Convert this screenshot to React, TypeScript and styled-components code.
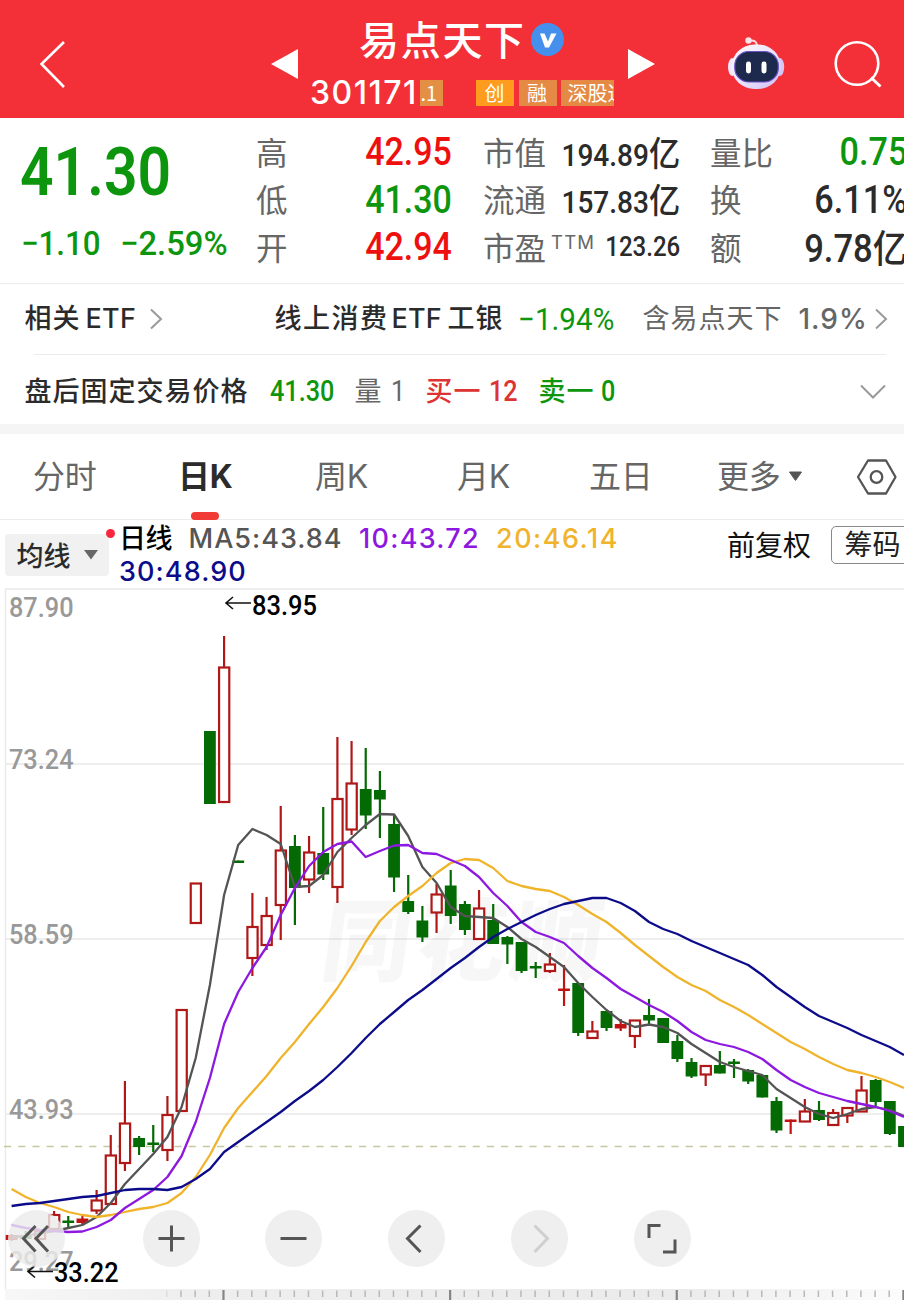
import React from "react";
import styled, { createGlobalStyle } from "styled-components";

const GREEN = "#0d960d";
const RED = "#ee0f0f";
const INK = "#2b2b2b";
const GREY = "#666666";

const CJK = `"Noto Sans CJK SC", sans-serif`;
const DIGITS = `Roboto, "Noto Sans CJK SC", sans-serif`;
const LATIN = `Inter, "Noto Sans CJK SC", sans-serif`;

const GlobalStyle = createGlobalStyle`
  * { box-sizing: border-box; }
  body { margin: 0; background: #fff; }
`;

const Page = styled.main`
  width: 904px;
  height: 1300px;
  display: flex;
  flex-direction: column;
  overflow: hidden;
  background: #fff;
  font-family: ${CJK};
  color: ${INK};
`;

/* ---------- header ---------- */

const Header = styled.header`
  height: 117.5px;
  flex: none;
  display: flex;
  background: #f33038;
  color: #fff;
`;

const HeaderSide = styled.div<{ $w: number }>`
  width: ${(p) => p.$w}px;
  flex: none;
  svg { display: block; }
`;

const Identity = styled.div`
  width: 330px;
  flex: none;
  padding: 14px 0 0 12px;
`;

const TitleLine = styled.div`
  display: flex;
  align-items: center;
  height: 50px;
  padding-left: 49px;
`;

const StockName = styled.h1`
  margin: 0;
  width: 172px;
  font-size: 40px;
  line-height: 48px;
  height: 50px;
  font-weight: 500;
  letter-spacing: 1.7px;
  white-space: nowrap;
`;

const CodeLine = styled.div`
  display: flex;
  height: 27px;
  margin-top: 15.5px;
  width: 304px;
  overflow: hidden;
`;

const Code = styled.span`
  width: 110px;
  flex: none;
  font: 500 32px/26px ${LATIN};
  letter-spacing: 1.5px;
  white-space: nowrap;
`;

const Tag = styled.span<{ $bg: string; $w: number; $gap?: number; $pad?: number }>`
  flex: none;
  width: ${(p) => p.$w}px;
  height: 26px;
  margin-left: ${(p) => p.$gap ?? 0}px;
  padding-left: ${(p) => p.$pad ?? 0}px;
  background: ${(p) => p.$bg};
  font: 400 20px/25px ${CJK};
  white-space: nowrap;
`;

/* ---------- quote ---------- */

const Quote = styled.section`
  height: 166px;
  flex: none;
  display: flex;
  border-bottom: 1.5px solid #ececec;
`;

const Figure = styled.span<{
  $size: number;
  $color?: string;
  $sx?: number;
  $right?: boolean;
  $weight?: number;
}>`
  display: inline-block;
  flex: none;
  font-family: ${DIGITS};
  font-size: ${(p) => p.$size}px;
  line-height: 1;
  font-weight: ${(p) => p.$weight ?? 500};
  color: ${(p) => p.$color ?? INK};
  white-space: nowrap;
  transform: scaleX(${(p) => p.$sx ?? 0.92});
  transform-origin: ${(p) => (p.$right ? "right" : "left")} center;
`;

const Unit = styled.span<{ $size: number }>`
  font-family: ${CJK};
  font-size: ${(p) => p.$size}px;
  line-height: 1;
`;

const PriceBlock = styled.div`
  width: 256px;
  flex: none;
  padding: 20px 0 0 20px;
`;

const PriceLine = styled.div`
  display: flex;
  align-items: center;
  height: 70px;
`;

const ChangeLine = styled.div`
  display: grid;
  grid-template-columns: 99px 120px;
  align-items: center;
  height: 40px;
  margin-top: 15.5px;
  padding-left: 1px;
`;

const StatColumn = styled.div<{ $w: number; $gap: number }>`
  width: ${(p) => p.$w}px;
  flex: none;
  margin-right: ${(p) => p.$gap}px;
  padding-top: 11px;
`;

const Stat = styled.div`
  display: flex;
  height: 47.6px;
  align-items: center;
  justify-content: space-between;
  white-space: nowrap;
`;

const StatLabel = styled.span`
  display: flex;
  flex: none;
  height: 47px;
  font-size: 31.5px;
  line-height: 45px;
  color: ${GREY};
`;

const Ttm = styled.sup`
  margin-left: 5px;
  font: 400 18.5px/37px ${LATIN};
  letter-spacing: 1.2px;
`;

/* ---------- info rows ---------- */

const InfoRow = styled.section<{ $h: number; $drop: number }>`
  display: flex;
  flex: none;
  align-items: center;
  height: ${(p) => p.$h}px;
  padding: ${(p) => p.$drop}px 0 0 24.5px;
`;

const Divider = styled.hr`
  flex: none;
  height: 1.5px;
  margin: 0 18px 0 34px;
  border: 0;
  background: #ebebeb;
`;

const Band = styled.div`
  flex: none;
  height: 10px;
  background: #f5f5f5;
`;

const Phrase = styled.span<{ $w: number; $color?: string; $weight?: number; $ls?: number; $size?: number }>`
  width: ${(p) => p.$w}px;
  flex: none;
  font: ${(p) => p.$weight ?? 500} ${(p) => p.$size ?? 27}px/40px ${LATIN};
  letter-spacing: ${(p) => p.$ls ?? 1}px;
  color: ${(p) => p.$color ?? INK};
  white-space: nowrap;
`;

const Cell = styled.span<{ $w: number }>`
  display: flex;
  flex: none;
  width: ${(p) => p.$w}px;
`;

/* ---------- tabs ---------- */

const Tabs = styled.nav`
  display: flex;
  flex: none;
  height: 86px;
  padding-left: 33px;
  border-bottom: 1.5px solid #ececec;
`;

const Tab = styled.div<{ $w: number; $active?: boolean }>`
  position: relative;
  width: ${(p) => p.$w}px;
  flex: none;
  display: flex;
  align-items: center;
  font: ${(p) => (p.$active ? 700 : 400)} 32px/86px ${LATIN};
  letter-spacing: -0.3px;
  color: ${(p) => (p.$active ? INK : GREY)};
  ${(p) =>
    p.$active &&
    `&::after {
      content: "";
      position: absolute;
      left: 13px;
      bottom: -0.5px;
      width: 28px;
      height: 7.5px;
      border-radius: 4px;
      background: #f03b37;
    }`}
`;

/* ---------- indicator row ---------- */

const Indicators = styled.section`
  display: flex;
  flex: none;
  height: 68px;
  padding-left: 5px;
`;

const AverageButton = styled.div`
  position: relative;
  flex: none;
  display: flex;
  align-items: center;
  gap: 13px;
  width: 104px;
  height: 42px;
  margin-top: 13.5px;
  padding-left: 11.5px;
  border-radius: 4px;
  background: #f1f1f1;
  font: 500 27px/42px ${CJK};
`;

const Dot = styled.i`
  position: absolute;
  top: -5px;
  right: -6px;
  width: 9px;
  height: 9px;
  border-radius: 50%;
  background: #f8273c;
`;

const Legend = styled.div`
  width: 618px;
  flex: none;
  padding: 2px 0 0 10px;
`;

const LegendLine = styled.div`
  display: flex;
  height: 33px;
  align-items: center;
`;

const Adjust = styled.span`
  width: 103.5px;
  flex: none;
  font: 400 28px/49px ${CJK};
  color: #111;
`;

const ChipButton = styled.div`
  flex: none;
  width: 90px;
  height: 37.5px;
  margin-top: 6px;
  padding-left: 13px;
  border: 1.5px solid #888;
  border-radius: 5px;
  font: 400 28px/33px ${CJK};
  color: #222;
  white-space: nowrap;
`;

/* ---------- chart ---------- */

const ChartArea = styled.section`
  position: relative;
  flex: none;
  height: 712px;
  svg { display: block; }
`;

const ZoomBar = styled.div`
  position: absolute;
  left: 8px;
  top: 621.5px;
  display: flex;
`;

const RoundButton = styled.div<{ $gap: number }>`
  width: 57px;
  height: 57px;
  margin-right: ${(p) => p.$gap}px;
  border-radius: 50%;
  background: rgba(235, 235, 235, 0.82);
`;

type Candle = [kind: "r" | "g" | "f", high: number, top: number, bottom: number, low: number];

const candles: Candle[] = [
  ["f", 1234, 1235, 1240, 1241], ["g", 1231, 1236, 1239, 1243], ["r", 1229, 1231, 1239, 1239],
  ["r", 1211, 1215, 1229, 1229], ["g", 1216, 1220.5, 1223, 1227], ["f", 1214, 1218.5, 1223, 1225],
  ["r", 1190, 1200.5, 1210.5, 1214], ["r", 1135, 1155.5, 1204, 1204], ["r", 1081, 1123.5, 1163, 1171],
  ["g", 1136, 1138, 1147, 1155], ["g", 1125, 1142.5, 1145, 1152], ["r", 1096, 1115, 1150, 1161],
  ["r", 1010, 1010, 1111, 1111], ["r", 883.5, 883.5, 923, 923], ["g", 731, 731, 804, 804],
  ["r", 636, 667.5, 802, 802], ["g", 860.5, 860.5, 863, 863], ["r", 893, 927, 958, 976],
  ["r", 897, 916, 945, 950], ["r", 806, 850.5, 905, 940], ["g", 835, 846, 888, 925],
  ["r", 836, 852.5, 879.5, 893], ["g", 807, 853, 874.5, 880], ["r", 737, 799, 887, 903],
  ["r", 741, 783.5, 829.5, 835], ["g", 748, 789, 815.5, 829], ["g", 771, 790, 799.5, 838],
  ["g", 815, 824, 877.5, 892], ["g", 875, 901, 912, 914], ["g", 906, 920.5, 937.5, 942],
  ["r", 884, 894.5, 912.5, 933], ["g", 870, 885.5, 916, 924], ["g", 901, 904, 930, 935],
  ["r", 890, 908.5, 939, 939], ["g", 904, 920, 944, 944], ["g", 936, 937, 944.5, 964],
  ["g", 942, 942, 971, 973], ["g", 962, 966, 968.5, 978], ["r", 953, 964.5, 971, 973],
  ["f", 965, 988.5, 991, 1006], ["g", 983, 983, 1033, 1036], ["r", 1021, 1031.5, 1038, 1038],
  ["g", 1011, 1011, 1028, 1031], ["f", 1019, 1024, 1028.5, 1031], ["r", 1020, 1020.5, 1036, 1048],
  ["g", 999, 1015, 1020.5, 1024], ["g", 1018, 1018, 1043, 1043], ["g", 1035, 1041, 1059, 1062],
  ["g", 1058, 1062, 1076.5, 1078], ["r", 1066, 1066, 1074.5, 1086], ["g", 1051, 1065, 1073.5, 1073.5],
  ["g", 1059, 1061.5, 1064, 1078], ["g", 1069, 1070, 1081.5, 1084], ["g", 1075, 1075, 1097.5, 1097.5],
  ["g", 1097, 1101, 1130.5, 1133], ["f", 1119.5, 1119.5, 1122, 1134], ["r", 1099, 1111.5, 1121.5, 1121.5],
  ["g", 1101, 1110, 1120, 1121], ["r", 1109, 1113, 1125, 1125], ["r", 1108, 1108, 1115.5, 1123],
  ["r", 1076, 1090.5, 1111.5, 1111.5], ["g", 1079, 1080, 1102, 1106], ["g", 1101, 1101, 1134, 1135],
  ["g", 1126, 1126, 1147, 1147],
];

const averages: { color: string; values: number[] }[] = [
  {
    color: "#545454",
    values: [
      1237, 1236, 1233, 1231, 1228, 1225, 1217, 1203, 1184, 1169, 1154, 1137, 1107, 1058, 985, 895, 845, 829, 835,
      844, 887, 886, 875, 852, 838, 825, 814, 814.5, 836, 867, 883, 907, 916, 917, 918, 927, 939, 947, 957, 967, 983,
      997, 1010, 1021, 1027, 1024.5, 1027, 1033, 1044, 1053, 1062, 1067, 1071, 1075, 1089, 1098, 1107, 1114, 1118,
      1114, 1109, 1107, 1110, 1116,
    ],
  },
  {
    color: "#f0b42c",
    values: [
      1189, 1197, 1203, 1207, 1212, 1215, 1217, 1215, 1212, 1209, 1207, 1203, 1193, 1177, 1155, 1128, 1108, 1092,
      1076, 1058, 1042, 1024, 1007, 988, 966, 942, 921, 907, 896, 886, 873, 863, 859, 860, 868, 881, 886, 889, 891,
      897, 905, 914, 922, 933, 945, 956, 967, 977, 985, 991, 1000, 1007, 1015, 1024, 1033, 1042, 1049, 1057, 1064,
      1070, 1073, 1077, 1082, 1088,
    ],
  },
  {
    color: "#8d18e0",
    values: [
      1225, 1228, 1230, 1231, 1232, 1231.5, 1227, 1220, 1208, 1199, 1190, 1177, 1156, 1122, 1078, 1024, 992, 968,
      947, 915, 888, 866, 852, 844, 841.5, 857, 851, 845.5, 845, 853, 854, 860, 866, 877, 893, 906, 922, 932, 937,
      943, 956, 968, 978, 989, 997, 1005, 1012, 1021, 1032, 1040, 1044, 1047, 1052, 1059, 1070, 1080, 1087, 1093,
      1097, 1101, 1104, 1107, 1111, 1117,
    ],
  },
  {
    color: "#0c0c8a",
    values: [
      1206, 1204, 1203, 1201, 1199, 1197, 1196, 1193, 1190, 1189, 1189, 1190, 1187, 1179, 1169, 1152, 1142, 1132,
      1122, 1112, 1101, 1091, 1080, 1067, 1053, 1038, 1024, 1012, 1000, 990, 979, 968, 958, 947, 937, 929, 922, 915,
      909, 904, 901, 898, 898, 903, 911, 922, 929, 934, 941, 947, 953, 959, 965, 975, 987, 997, 1007, 1016, 1022,
      1028, 1035, 1041, 1047, 1055,
    ],
  },
];

const axis: [string, number][] = [
  ["87.90", 617], ["73.24", 768.5], ["58.59", 943.5], ["43.93", 1118.5], ["29.27", 1271],
];

const step = 14.165;
const xAt = (i: number) => 11.6 + i * step;

const Chart = () => (
  <svg width="904" height="712" viewBox="0 588 904 712">
    <g stroke="#e9e9e9" strokeWidth="1.5">
      <path d="M5 589H904M5.5 589V1290M5 764H904M5 939H904M5 1114H904" />
    </g>
    <text
      x="0" y="0" transform="translate(318 974) skewX(-8)" fontFamily={CJK} fontSize="90" fontWeight="900"
      fill="#000" fillOpacity=".032" textLength="280"
    >
      同花顺
    </text>
    <path d="M4 1146.5H904" stroke="#c8c8a0" strokeWidth="1.6" strokeDasharray="7.2 7" />
    {axis.map(([label, y]) => (
      <text
        key={label} x="9" y={y} fontFamily={DIGITS} fontSize="28.5" fontWeight="500" fill="#999"
        textLength="64.5" lengthAdjust="spacingAndGlyphs"
      >
        {label}
      </text>
    ))}
    {candles.map(([kind, high, top, bottom, low], i) => {
      const x = xAt(i);
      const color = kind === "g" ? "#046a04" : kind === "f" ? "#c01414" : "#b01818";
      return (
        <g key={i} stroke={color} fill={color} strokeWidth="2.2">
          {kind === "r" ? (
            <>
              {high < top && <path d={`M${x} ${high}V${top}`} />}
              {low > bottom && <path d={`M${x} ${bottom}V${low}`} />}
              <rect x={x - 5} y={top} width="10.2" height={bottom - top} fill="#fff" />
            </>
          ) : (
            <>
              <path d={`M${x} ${high}V${low}`} />
              <rect x={x - 5.9} y={top} width="11.8" height={bottom - top} stroke="none" />
            </>
          )}
        </g>
      );
    })}
    {averages.map(({ color, values }) => (
      <polyline
        key={color} fill="none" stroke={color} strokeWidth="2.3" strokeLinejoin="round"
        points={values.map((v, i) => `${xAt(i).toFixed(1)},${v}`).join(" ")}
      />
    ))}
    <g fontFamily={DIGITS} fontSize="28.5" fontWeight="500" fill="#000">
      <text x="252" y="614.5" textLength="65" lengthAdjust="spacingAndGlyphs">83.95</text>
      <text x="54" y="1282" textLength="64.5" lengthAdjust="spacingAndGlyphs">33.22</text>
    </g>
    <path
      d="M251 603H226M233 597L226 603L233 609M53 1271.5H28M35 1265.5L28 1271.5L35 1277.5"
      fill="none" stroke="#111" strokeWidth="1.6"
    />
    <defs>
      <linearGradient id="strip">
        <stop offset="0" stopColor="#f7f7f7" />
        <stop offset=".22" stopColor="#eeeeee" />
        <stop offset=".75" stopColor="#ebebeb" />
        <stop offset="1" stopColor="#fcfcfc" />
      </linearGradient>
    </defs>
    <rect x="5" y="1289" width="899" height="11" fill="url(#strip)" />
    {Array.from({ length: 53 }, (_, k) => k + 11).map((i) => {
      const major = (i - 15) % 16 === 0;
      return (
        <path
          key={i} d={`M${xAt(i) - 0.6} ${major ? 1290 : 1290.5}V${major ? 1300 : 1297}`}
          stroke={major ? "#858585" : i === 11 ? "#ddd" : "#b8b8b8"} strokeWidth={major ? 2.2 : 1.5}
        />
      );
    })}
  </svg>
);

const toolIcons: { d: string; gap: number; faded?: boolean }[] = [
  { d: "M27.5 16L15.5 28.5L27.5 41.5M40 16L28 28.5L40 41.5", gap: 77.5 },
  { d: "M15.5 28.5H41.5M28.5 15.5V41.5", gap: 65.5 },
  { d: "M15.5 28.5H41.5", gap: 65.5 },
  { d: "M32.5 15.5L19.5 28.5L32.5 42", gap: 66 },
  { d: "M23.5 15.5L36.5 28.5L23.5 42", gap: 66, faded: true },
  { d: "M26.5 15.5H15V28M41 29.5V42H29", gap: 0 },
];

const Robot = () => (
  <g>
    <path d="M747 41.5Q757 38 757 47" fill="none" stroke="#ffd9e2" strokeWidth="2" />
    <circle cx="748.5" cy="40.5" r="3.2" fill="#ffe3ea" />
    <ellipse cx="732.2" cy="67" rx="4.2" ry="9" fill="#f1e6fa" />
    <ellipse cx="780" cy="67" rx="4.2" ry="9" fill="#d5c6f6" />
    <defs>
      <linearGradient id="shell" x1="0" y1="0" x2="1" y2="1">
        <stop offset="0" stopColor="#fffafc" />
        <stop offset=".55" stopColor="#eae2fb" />
        <stop offset="1" stopColor="#cdbcf3" />
      </linearGradient>
    </defs>
    <rect x="731.5" y="44.5" width="49.5" height="44.5" rx="23" fill="url(#shell)" />
    <rect x="734.8" y="51.5" width="43.5" height="30.5" rx="14" fill="#1e2a4d" stroke="#6953c8" strokeWidth="1.2" />
    <rect x="746" y="61.5" width="5" height="12" rx="2.4" fill="#fff" />
    <rect x="761.5" y="61.5" width="5" height="12" rx="2.4" fill="#fff" />
  </g>
);

export default function App() {
  return (
    <Page>
      <GlobalStyle />
      <Header>
        <HeaderSide $w={298}>
          <svg width="298" height="117">
            <path d="M64 42L41.5 64L64 87" fill="none" stroke="#fff" strokeWidth="2.6" />
            <path d="M271 64L298 49V79Z" fill="#fff" />
          </svg>
        </HeaderSide>
        <Identity>
          <TitleLine>
            <StockName>易点天下</StockName>
            <svg width="33" height="33" viewBox="0 0 33 33">
              <circle cx="16.5" cy="16.5" r="16.5" fill="#4590ec" />
              <path d="M9 10.5H13.5L17 18.5L20 10.5H25.5L18 24.5H14Z" fill="#fff" />
            </svg>
          </TitleLine>
          <CodeLine>
            <Code>301171</Code>
            <Tag $bg="#e39044" $w={23} $pad={0.5}>.1</Tag>
            <Tag $bg="#ff9c1e" $w={38} $gap={33} $pad={8.5}>创</Tag>
            <Tag $bg="#e58a45" $w={37.5} $gap={5} $pad={8}>融</Tag>
            <Tag $bg="#e58a45" $w={72} $gap={4.5} $pad={6.5}>深股通</Tag>
          </CodeLine>
        </Identity>
        <HeaderSide $w={276}>
          <svg width="276" height="117" viewBox="628 0 276 117">
            <path d="M628 49V79L655 64Z" fill="#fff" />
            <Robot />
            <circle cx="857" cy="63.5" r="21.3" fill="none" stroke="#fff" strokeWidth="2.6" />
            <path d="M871 77.5L880.5 86.5" stroke="#fff" strokeWidth="3" />
          </svg>
        </HeaderSide>
      </Header>

      <Quote>
        <PriceBlock>
          <PriceLine>
            <Figure $size={66.5} $color={GREEN} $sx={0.885} $weight={600}>41.30</Figure>
          </PriceLine>
          <ChangeLine>
            <Figure $size={34} $color={GREEN}>−1.10</Figure>
            <Figure $size={34} $color={GREEN} $sx={0.965}>−2.59%</Figure>
          </ChangeLine>
        </PriceBlock>
        <StatColumn $w={196} $gap={31}>
          <Stat><StatLabel>高</StatLabel><Figure $size={38} $color={RED} $sx={0.895} $right>42.95</Figure></Stat>
          <Stat><StatLabel>低</StatLabel><Figure $size={38} $color={GREEN} $sx={0.895} $right>41.30</Figure></Stat>
          <Stat><StatLabel>开</StatLabel><Figure $size={38} $color={RED} $sx={0.895} $right>42.94</Figure></Stat>
        </StatColumn>
        <StatColumn $w={197} $gap={30}>
          <Stat><StatLabel>市值</StatLabel><Figure $size={31} $sx={0.905} $right>194.89<Unit $size={34.5}>亿</Unit></Figure></Stat>
          <Stat><StatLabel>流通</StatLabel><Figure $size={31} $sx={0.905} $right>157.83<Unit $size={34.5}>亿</Unit></Figure></Stat>
          <Stat><StatLabel>市盈<Ttm>TTM</Ttm></StatLabel><Figure $size={27} $sx={0.89} $right>123.26</Figure></Stat>
        </StatColumn>
        <StatColumn $w={197} $gap={0}>
          <Stat><StatLabel>量比</StatLabel><Figure $size={38} $color={GREEN} $sx={0.9} $right>0.75</Figure></Stat>
          <Stat><StatLabel>换</StatLabel><Figure $size={38} $sx={0.9} $right>6.11%</Figure></Stat>
          <Stat><StatLabel>额</StatLabel><Figure $size={38} $sx={0.91} $right>9.78<Unit $size={38}>亿</Unit></Figure></Stat>
        </StatColumn>
      </Quote>

      <InfoRow $h={70} $drop={1}>
        <Phrase $w={61}>相关</Phrase>
        <Phrase $w={63} $ls={0.3}>ETF</Phrase>
        <Cell $w={126}>
          <svg width="14" height="22"><path d="M2 1.5L12 11L2 20.5" fill="none" stroke="#999" strokeWidth="2" /></svg>
        </Cell>
        <Phrase $w={117} $ls={1.5}>线上消费</Phrase>
        <Phrase $w={56} $ls={0.2}>ETF</Phrase>
        <Phrase $w={70}>工银</Phrase>
        <Cell $w={125}><Figure $size={31} $weight={400} $sx={0.955} $color={GREEN}>−1.94%</Figure></Cell>
        <Phrase $w={156} $color={GREY} $weight={400}>含易点天下</Phrase>
        <Phrase $w={75} $color={GREY} $size={28} $ls={1}>1.9%</Phrase>
        <svg width="14" height="22"><path d="M2 1.5L12 11L2 20.5" fill="none" stroke="#999" strokeWidth="2" /></svg>
      </InfoRow>
      <Divider />
      <InfoRow $h={69} $drop={4}>
        <Phrase $w={245}>盘后固定交易价格</Phrase>
        <Cell $w={85}><Figure $size={29} $sx={0.87} $color={GREEN}>41.30</Figure></Cell>
        <Phrase $w={36} $color={GREY} $weight={400}>量</Phrase>
        <Cell $w={35}><Figure $size={29} $weight={400} $sx={0.87} $color={GREY}>1</Figure></Cell>
        <Phrase $w={63} $color="#dd3333">买一</Phrase>
        <Cell $w={50}><Figure $size={29} $sx={0.87} $color="#dd3333">12</Figure></Cell>
        <Phrase $w={62} $color={GREEN}>卖一</Phrase>
        <Cell $w={259}><Figure $size={29} $sx={0.87} $color={GREEN}>0</Figure></Cell>
        <svg width="26" height="16"><path d="M1 1.5L13 13.5L25 1.5" fill="none" stroke="#999" strokeWidth="2" /></svg>
      </InfoRow>
      <Band />

      <Tabs>
        <Tab $w={145}>分时</Tab>
        <Tab $w={137} $active>日K</Tab>
        <Tab $w={142}>周K</Tab>
        <Tab $w={132}>月K</Tab>
        <Tab $w={128}>五日</Tab>
        <Tab $w={139}>
          更多
          <svg width="15" height="11" style={{ marginLeft: 8 }}>
            <path d="M1.5 1H13.5L7.5 9.5Z" fill="#555" stroke="#555" strokeLinejoin="round" />
          </svg>
        </Tab>
        <Tab $w={42}>
          <svg width="42" height="36">
            <path d="M12 1.5H30L39.5 18L30 34.5H12L2 18Z" fill="none" stroke="#555" strokeWidth="2.3" strokeLinejoin="round" />
            <circle cx="20.5" cy="18" r="5.8" fill="none" stroke="#555" strokeWidth="2.3" />
          </svg>
        </Tab>
      </Tabs>

      <Indicators>
        <AverageButton>
          均线
          <svg width="14" height="10"><path d="M0 0H14L7 9.5Z" fill="#666" /></svg>
          <Dot />
        </AverageButton>
        <Legend>
          <LegendLine>
            <Phrase $w={69.5} $color="#000" $ls={-0.5}>日线</Phrase>
            <Phrase $w={170.5} $color="#555">MA5:43.84</Phrase>
            <Phrase $w={137} $color="#8d18e0" $ls={1.3}>10:43.72</Phrase>
            <Phrase $w={130} $color="#f0b42c" $ls={1.5}>20:46.14</Phrase>
          </LegendLine>
          <LegendLine>
            <Phrase $w={130} $color="#0c0c8a" $ls={1.1}>30:48.90</Phrase>
          </LegendLine>
        </Legend>
        <Adjust>前复权</Adjust>
        <ChipButton>筹码</ChipButton>
      </Indicators>

      <ChartArea>
        <Chart />
        <ZoomBar>
          {toolIcons.map(({ d, gap, faded }) => (
            <RoundButton key={d} $gap={gap}>
              <svg width="57" height="57">
                <path d={d} fill="none" stroke={faded ? "#cfcfcf" : "#555"} strokeWidth="3" />
              </svg>
            </RoundButton>
          ))}
        </ZoomBar>
      </ChartArea>
    </Page>
  );
}
